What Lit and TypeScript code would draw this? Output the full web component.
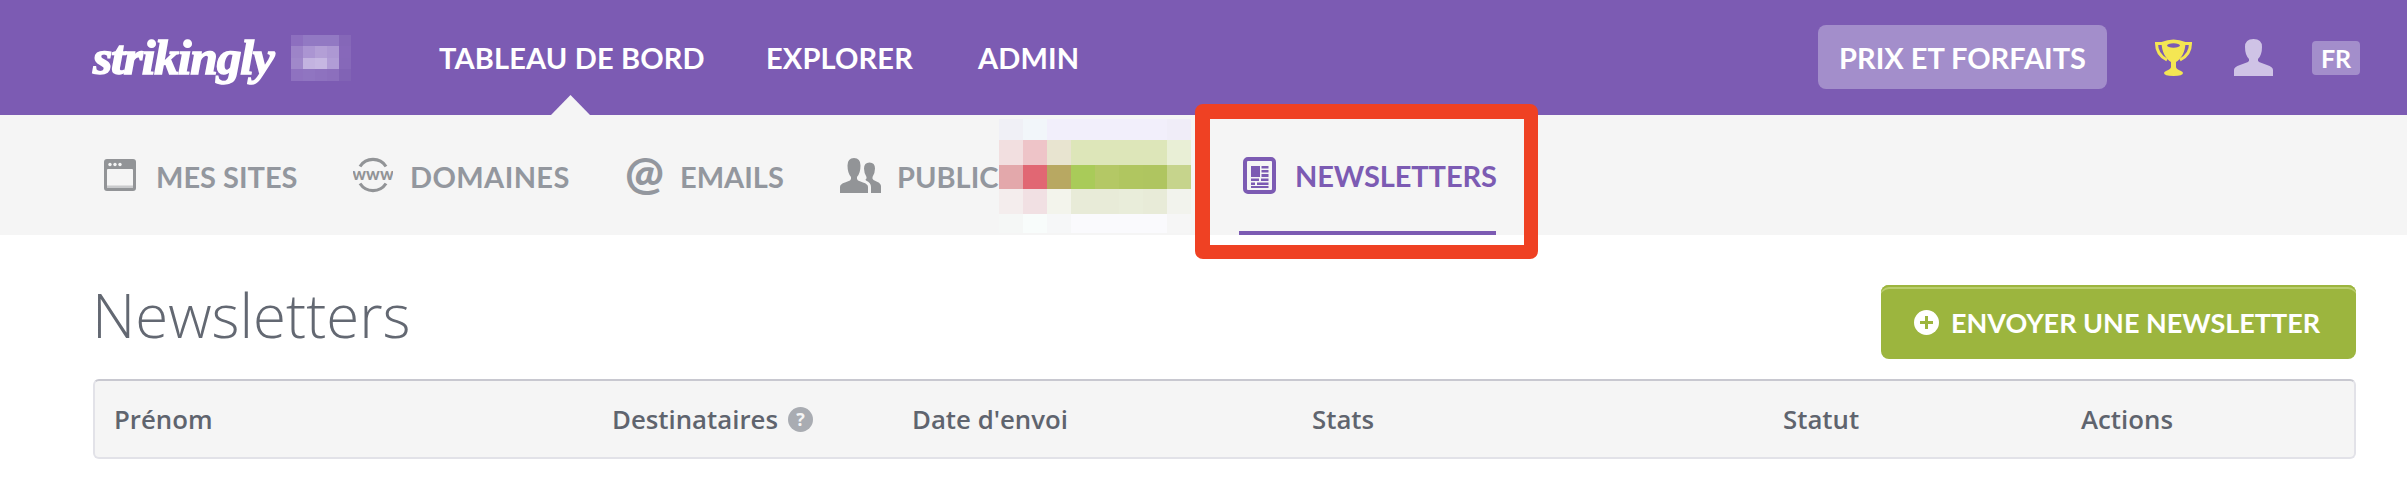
import { LitElement, html, css, svg } from "lit";
import { customElement } from "lit/decorators.js";

const LOGO_MOSAIC = [
  ["#8d6fbf", "#9279c3", "#9279c3", "#9279c3", "#8567b8"],
  ["#9d84c8", "#ab95d2", "#b39fd6", "#ad98d3", "#8768ba"],
  ["#a088ca", "#c3b3e0", "#c6b7e2", "#b19dd6", "#8668b9"],
  ["#8f72c0", "#9075c1", "#8e72bf", "#8c6fbd", "#8163b5"],
];

const PUBLIC_MOSAIC = [
  ["#f0f0f6", "#f2f6fa", "#f2effb", "#f2effb", "#f2effb", "#f2effb", "#f2effb", "#f0edf8"],
  ["#f2dfe0", "#eec4c8", "#e8e4d0", "#dde6b9", "#dde6b9", "#dde6b9", "#dde6b9", "#e9efd6"],
  ["#e3a8ab", "#e16773", "#b8a862", "#a9cb59", "#b4c865", "#b0c660", "#afc560", "#c6d48c"],
  ["#f4eded", "#f1e0e3", "#f3f4ec", "#e8ebd8", "#e8ebd8", "#e9edda", "#e8ebd8", "#f2f3ed"],
  ["#f5f7f6", "#f8fcfb", "#f6f7f8", "#fafafd", "#fafafd", "#fafafd", "#fafafd", "#f6f6f6"],
];

const cells = (rows: string[][]) =>
  rows.flat().map((c) => html`<i style="background:${c}"></i>`);

const windowIcon = svg`<svg class="ico" width="32" height="32" viewBox="0 0 32 32">
  <rect width="32" height="32" rx="3" fill="#929497"/>
  <rect x="3" y="10" width="26" height="19" rx="1" fill="#f5f5f5"/>
  <rect x="3" y="26.5" width="26" height="2.5" fill="#c9cacc"/>
  <circle cx="6" cy="5.5" r="1.7" fill="#f5f5f5"/><circle cx="11" cy="5.5" r="1.7" fill="#f5f5f5"/><circle cx="16" cy="5.5" r="1.7" fill="#f5f5f5"/>
</svg>`;

const wwwIcon = svg`<svg class="ico" width="40" height="36" viewBox="0 0 40 36">
  <path d="M7 9.500 A15.500 15.500 0 0 1 33 9.500" fill="none" stroke="#929497" stroke-width="3.200"/>
  <path d="M7 26.500 A15.500 15.500 0 0 0 33 26.500" fill="none" stroke="#929497" stroke-width="3.200"/>
  <text x="20" y="23" text-anchor="middle" font-family="Lato, sans-serif" font-weight="900" font-size="17" fill="#929497">www</text>
</svg>`;

const usersIcon = svg`<svg class="ico" width="41" height="35" viewBox="0 0 41 35">
  <path fill="#929497" d="M0 35 V29 Q0 26 5 24.500 L10 22.500 Q11.500 21.500 11 19 Q7.500 15 7.500 7.500 Q7.500 0 14 0 Q20.500 0 20.500 7.500 Q20.500 15 17 19 Q16.500 21.500 18 22.500 L23 24.500 Q28 26 28 29 V35Z"/>
  <path fill="#929497" d="M31 35 V29 Q31 24.500 26 22.500 L25.500 21.500 Q27 20.500 26.500 19 Q24 15 24 10.500 Q24 4.500 29.500 4.500 Q35 4.500 35 10.500 Q35 15 32.500 19 Q32 21 33.500 22 L37.500 24 Q41 25.500 41 28.500 V35Z"/>
</svg>`;

const newsIcon = svg`<svg class="ico" width="33" height="37" viewBox="0 0 33 37">
  <rect x="2" y="2" width="29" height="33" rx="3" fill="none" stroke="#7c5bb3" stroke-width="4"/>
  <g fill="#7c5bb3">
    <rect x="8" y="9" width="9" height="11"/>
    <rect x="18.500" y="9" width="7" height="2.500"/><rect x="18.500" y="13" width="7" height="2.500"/><rect x="18.500" y="17" width="7" height="3"/>
    <rect x="8" y="21.500" width="8" height="2.500"/><rect x="18" y="21.500" width="7.500" height="2.500"/>
    <rect x="8" y="25.500" width="4" height="2.500"/><rect x="14" y="25.500" width="11.500" height="2.500"/>
    <rect x="8" y="29" width="17.500" height="2"/>
  </g>
</svg>`;

const trophyIcon = svg`<svg width="37" height="37" viewBox="0 0 37 37">
  <path fill="none" stroke="#f4e653" stroke-width="3" d="M8 4.500 H1.500 C1.500 12 4 17 12 21 M29 4.500 H35.500 C35.500 12 33 17 25 21"/>
  <path fill="#f4e653" d="M6.500 3 Q18.500 -2 30.500 3 C30.500 13 26 20 21 23 V28 Q21 30 26 32 Q28 33 28 34 Q28 37 18.500 37 Q9 37 9 34 Q9 33 11 32 Q16 30 16 28 V23 C11 20 6.500 13 6.500 3Z"/>
  <ellipse cx="18.500" cy="6.500" rx="6.500" ry="2.200" fill="#7c5bb3"/>
</svg>`;

const userIcon = svg`<svg width="39" height="37" viewBox="0 0 39 37">
  <path fill="#cfc3e6" d="M0 37 V31 Q0 28 6 26 L14 23 Q15.500 22 15 20 Q11 16 11 8 Q11 0 19.500 0 Q28 0 28 8 Q28 16 24 20 Q23.500 22 25 23 L33 26 Q39 28 39 31 V37Z"/>
</svg>`;

const plusIcon = svg`<svg width="25" height="25" viewBox="0 0 25 25">
  <circle cx="12.500" cy="12.500" r="12.500" fill="#fff"/>
  <path d="M12.500 6 V19 M6 12.500 H19" stroke="#9cb53e" stroke-width="3"/>
</svg>`;

@customElement("app-root")
export class AppRoot extends LitElement {
  static styles = css`
    :host { display: block; position: relative; width: 2407px; height: 501px; background: #fff; overflow: hidden; font-family: Lato, "Liberation Sans", sans-serif; }
    .top { position: relative; height: 115px; background: #7c5bb3; display: grid; grid-template-columns: 346px 327px 212px 1fr auto; align-items: center; padding: 0 47px 0 93px; color: #fff; }
    .brand { display: flex; align-items: center; gap: 17px; }
    .logo { width: 181px; font: italic 700 49.500px/46px "Liberation Serif", serif; letter-spacing: -1.2px; -webkit-text-stroke: 1.5px #fff; white-space: nowrap; }
    .logo-mosaic { width: 60px; height: 46px; display: grid; grid-template-columns: repeat(5, 12px); grid-auto-rows: 11.5px; }
    .logo-mosaic i, .pub-mosaic i { display: block; }
    .top-link { font-weight: 700; font-size: 29px; letter-spacing: 0.15px; white-space: nowrap; margin-top: -1px; }
    .right { grid-column: 5; display: flex; align-items: center; }
    .plans { width: 289px; height: 64px; border-radius: 8px; background: #a38ecb; display: flex; align-items: center; justify-content: center; font-weight: 700; font-size: 29px; margin: -1px 48px 0 0; }
    .right svg { display: block; }
    .user { margin: 0 39px 0 42px; }
    .lang { width: 48px; height: 34px; border-radius: 4px; background: #a38ecb; display: flex; align-items: center; justify-content: center; font-weight: 700; font-size: 25px; }
    .caret { position: absolute; left: 551px; top: 95px; width: 39px; height: 20px; background: #f5f5f5; clip-path: polygon(50% 0, 100% 100%, 0 100%); }
    .sub { height: 120px; background: #f5f5f5; display: grid; grid-template-columns: 249px 273px 214px 399px 257px; padding-left: 104px; }
    .tab { display: flex; align-items: center; height: 120px; box-sizing: border-box; color: #93979e; font-weight: 700; font-size: 29px; white-space: nowrap; }
    .lbl { display: block; padding-top: 3px; }
    .tab .ico { display: block; flex: none; }
    .tab.active { color: #7c5bb3; border-bottom: 4px solid #7c5bb3; padding: 4px 0 0 4px; }
    .active .lbl { padding-top: 0; letter-spacing: -0.1px; }
    .t1 .ico { margin-right: 20px; }
    .t2 .ico { margin-right: 17px; }
    .t2 .lbl { letter-spacing: 0.4px; }
    .at { font: 900 46px/46px Lato, sans-serif; width: 55px; margin: -7px 0 0 -1px; color: #93979e; }
    .t4 .ico { margin-right: 16px; }
    .active .ico { margin-right: 19px; }
    .pub-mosaic { position: absolute; left: 999px; top: 119px; display: grid; grid-template-columns: repeat(8, 24px); grid-template-rows: 21px 25px 24px 25px 19px; }
    .frame { position: absolute; left: 1195px; top: 104px; width: 343px; height: 155px; box-sizing: border-box; border: 15px solid #ef4123; border-width: 15px 14px 14px 15px; border-radius: 8px; pointer-events: none; }
    main { padding: 50px 51px 0 93px; }
    .head { display: flex; justify-content: space-between; align-items: flex-start; height: 94px; }
    h1 { margin: -10px 0 0 -1px; font: 300 60px/80px "Open Sans", sans-serif; color: #636872; }
    .send { width: 475px; height: 74px; box-sizing: border-box; border-radius: 8px; background: #9cb53e; box-shadow: inset 0 3px 0 -1px #9cb53e, inset 0 5px 0 -1px #b9cd6e; display: flex; align-items: center; gap: 12px; padding-left: 33px; color: #fff; font-weight: 700; font-size: 27px; white-space: nowrap; }
    .send svg { display: block; flex: none; }
    .thead { height: 80px; box-sizing: border-box; border: 2px solid #e2e2e8; border-top-color: #c8c8d0; border-radius: 6px; background: #f5f5f5; display: grid; grid-template-columns: 498px 300px 400px 471px 298px 1fr; align-items: center; padding-left: 19px; color: #5f646e; font: 600 25.800px/30px "Open Sans", sans-serif; }
    .thead span { display: flex; align-items: center; gap: 10px; }
    .q { width: 25px; height: 25px; border-radius: 50%; background: #a9acb2; color: #f5f5f5; font: 700 18px/25px "Open Sans", sans-serif; display: inline-block; text-align: center; }
  `;

  render() {
    return html`
      <header class="top">
        <div class="brand"><div class="logo">strikingly</div><div class="logo-mosaic">${cells(LOGO_MOSAIC)}</div></div>
        <div class="top-link">TABLEAU DE BORD</div>
        <div class="top-link">EXPLORER</div>
        <div class="top-link">ADMIN</div>
        <div class="right">
          <div class="plans">PRIX ET FORFAITS</div>
          ${trophyIcon}
          <div class="user">${userIcon}</div>
          <div class="lang">FR</div>
        </div>
        <div class="caret"></div>
      </header>
      <nav class="sub">
        <div class="tab t1">${windowIcon}<span class="lbl">MES SITES</span></div>
        <div class="tab t2">${wwwIcon}<span class="lbl">DOMAINES</span></div>
        <div class="tab t3"><span class="at">@</span><span class="lbl">EMAILS</span></div>
        <div class="tab t4">${usersIcon}<span class="lbl">PUBLIC</span></div>
        <div class="tab active">${newsIcon}<span class="lbl">NEWSLETTERS</span></div>
      </nav>
      <div class="pub-mosaic">${cells(PUBLIC_MOSAIC)}</div>
      <div class="frame"></div>
      <main>
        <div class="head">
          <h1>Newsletters</h1>
          <div class="send">${plusIcon}ENVOYER UNE NEWSLETTER</div>
        </div>
        <div class="thead">
          <span>Prénom</span>
          <span>Destinataires <i class="q">?</i></span>
          <span>Date d'envoi</span>
          <span>Stats</span>
          <span>Statut</span>
          <span>Actions</span>
        </div>
      </main>
    `;
  }
}
